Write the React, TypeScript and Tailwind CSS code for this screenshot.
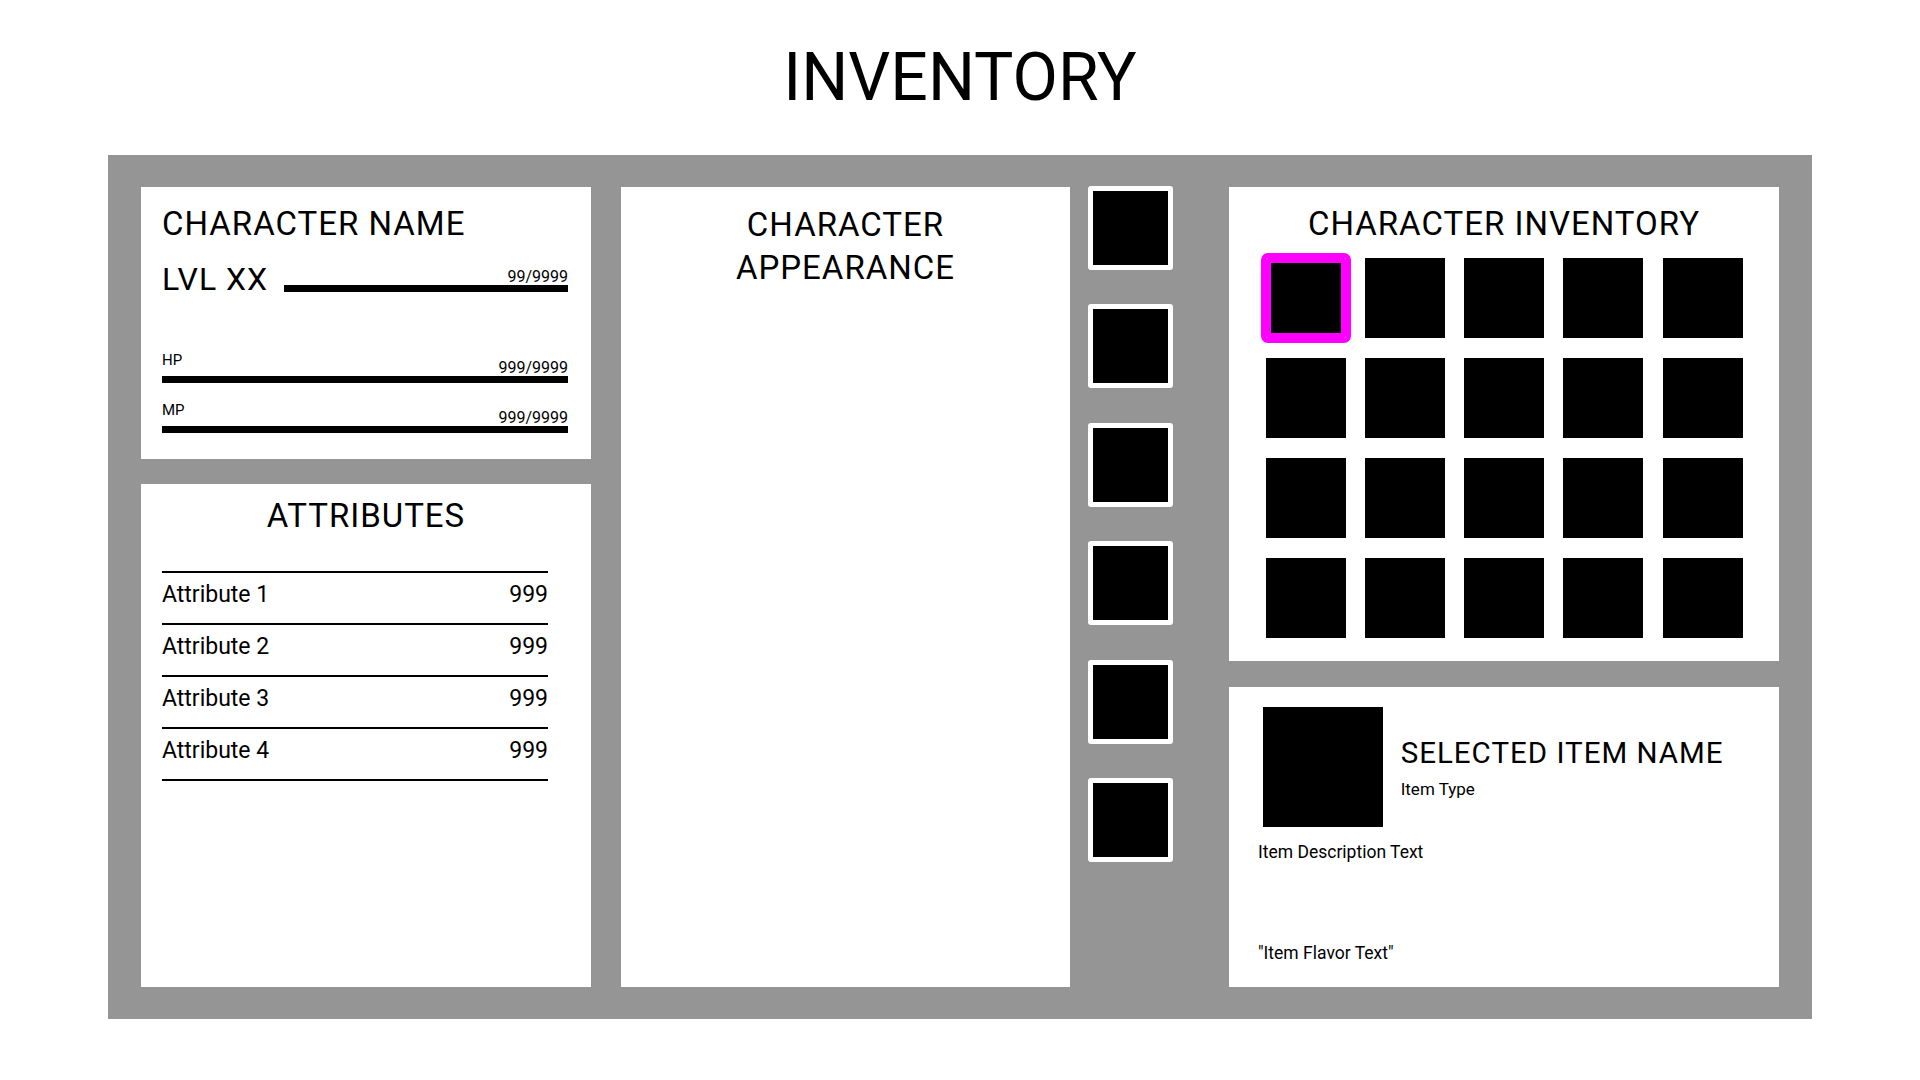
function Stat({ label, className }: { label: string; className: string }) {
  return (
    <div className={className}>
      <div className="flex justify-between items-end">
        <span className="text-[15px] leading-[15px] mb-[7.5px]">{label}</span>
        <span className="text-[16px] leading-[16px]">999/9999</span>
      </div>
      <div className="h-[7px] bg-black" />
    </div>
  );
}

const attributes = ["Attribute 1", "Attribute 2", "Attribute 3", "Attribute 4"];
const cells = Array.from({ length: 20 }, (_, i) => i);
const equip = Array.from({ length: 6 }, (_, i) => i);

export default function App() {
  return (
    <div className="w-[1920px] h-[1080px] bg-white flex flex-col items-center font-['Roboto',sans-serif] text-black">
      <h1 className="mt-[45px] text-[66px] leading-[66px] font-normal">INVENTORY</h1>
      <div className="mt-[44px] w-[1704px] h-[864px] bg-[#959595] px-[33px] py-[32px] flex">
        {/* Column 1 */}
        <div className="w-[450px] flex flex-col gap-[25px]">
          <div className="h-[272px] bg-white pl-[21px] pr-[23px] pt-[20px]">
            <div className="text-[33px] leading-[33px] tracking-[1px]">CHARACTER NAME</div>
            <div className="mt-[23px] flex items-end">
              <div className="text-[32px] leading-[32px] tracking-[1px]">LVL XX</div>
              <div className="w-[284px] ml-auto mb-[3.5px] flex flex-col">
                <div className="text-right text-[16px] leading-[16px]">99/9999</div>
                <div className="h-[7px] bg-black" />
              </div>
            </div>
            <Stat label="HP" className="mt-[58px]" />
            <Stat label="MP" className="mt-[20.5px]" />
          </div>
          <div className="flex-1 bg-white pt-[15px]">
            <div className="text-center text-[33px] leading-[33px] tracking-[1px]">ATTRIBUTES</div>
            <div className="mt-[39px] ml-[21px] mr-[43px]">
              {attributes.map((a, i) => (
                <div
                  key={a}
                  className={
                    i === attributes.length - 1
                      ? "border-t-2 border-b-2 border-black flex justify-between text-[23px] leading-[44px] pb-[6px]"
                      : "border-t-2 border-black flex justify-between text-[23px] leading-[44px] pb-[6px]"
                  }
                >
                  <span>{a}</span>
                  <span>999</span>
                </div>
              ))}
            </div>
          </div>
        </div>

        {/* Column 2: appearance */}
        <div className="w-[449px] ml-[30px] bg-white pt-[16px] text-center text-[33px] leading-[43px] tracking-[1px]">
          CHARACTER
          <br />
          APPEARANCE
        </div>

        {/* Equipment slots */}
        <div className="w-[85px] ml-[18px] -mt-[1.3px] flex flex-col gap-[34.5px]">
          {equip.map((i) => (
            <div key={i} className="h-[84px] border-[5px] border-white rounded-[3px] bg-black" />
          ))}
        </div>

        {/* Column 4 */}
        <div className="w-[550px] ml-[56px] flex flex-col gap-[26px]">
          <div className="h-[474px] bg-white pt-[20px]">
            <div className="text-center text-[33px] leading-[33px] tracking-[1px]">CHARACTER INVENTORY</div>
            <div className="mt-[18px] grid grid-cols-[repeat(5,80px)] gap-x-[19.25px] gap-y-[20px] justify-center">
              {cells.map((i) => (
                <div
                  key={i}
                  className={
                    i === 0
                      ? "w-[80px] h-[80px] bg-black border-[5px] border-[#ff00ff] outline-solid outline-[5px] outline-[#ff00ff] rounded-[2px]"
                      : "w-[80px] h-[80px] bg-black"
                  }
                />
              ))}
            </div>
          </div>
          <div className="flex-1 bg-white px-[29px] pt-[20px]">
            <div className="flex ml-[5px]">
              <div className="w-[120px] h-[119.5px] bg-black" />
              <div className="ml-[17.7px] mt-[31.3px]">
                <div className="text-[29.5px] leading-[30px] tracking-[1px]">SELECTED ITEM NAME</div>
                <div className="mt-[12.4px] text-[17px] leading-[17px]">Item Type</div>
              </div>
            </div>
            <div className="mt-[17.6px] text-[17.5px] leading-[17.5px]">Item Description Text</div>
            <div className="mt-[83.5px] text-[17.5px] leading-[17.5px]">"Item Flavor Text"</div>
          </div>
        </div>
      </div>
    </div>
  );
}
